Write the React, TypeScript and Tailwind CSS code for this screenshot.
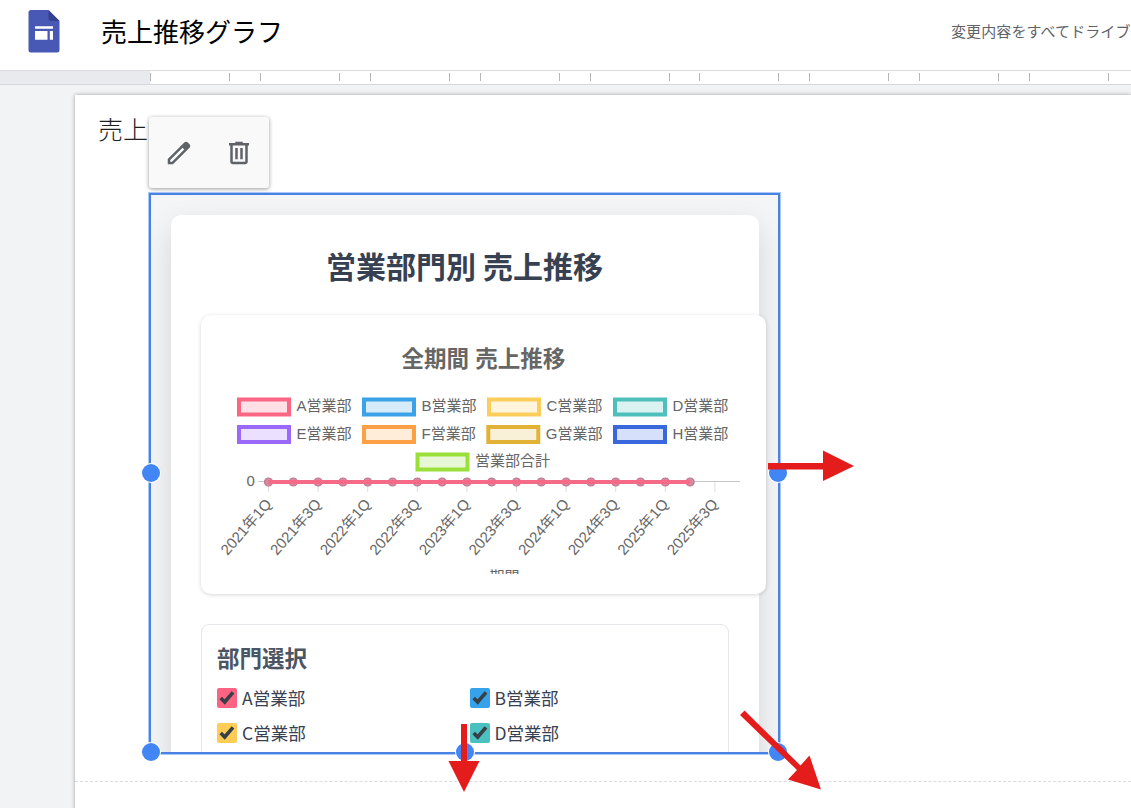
import type { ReactNode } from 'react';

interface Department {
  name: string;
  color: string;
  fill: string;
  x: number;
  y: number;
}

const DEPARTMENTS: Department[] = [
  { name: 'A営業部', color: '#fa6683', fill: '#ffe0e6', x: 16, y: 62.5 },
  { name: 'B営業部', color: '#3ba2e8', fill: '#d7ecfb', x: 141, y: 62.5 },
  { name: 'C営業部', color: '#fdcd5b', fill: '#fff5dd', x: 266, y: 62.5 },
  { name: 'D営業部', color: '#4fbfbc', fill: '#dbf2f2', x: 392, y: 62.5 },
  { name: 'E営業部', color: '#9a69fa', fill: '#ebe0ff', x: 16, y: 90 },
  { name: 'F営業部', color: '#fd9f45', fill: '#ffecd9', x: 141, y: 90 },
  { name: 'G営業部', color: '#e1b235', fill: '#f8f0d7', x: 265.3, y: 90 },
  { name: 'H営業部', color: '#3968dd', fill: '#d6e0fb', x: 392, y: 90 },
  { name: '営業部合計', color: '#9be03a', fill: '#e8f8d6', x: 194.5, y: 117.5 },
];

const QUARTERS = [
  '2021年1Q',
  '2021年3Q',
  '2022年1Q',
  '2022年3Q',
  '2023年1Q',
  '2023年3Q',
  '2024年1Q',
  '2024年3Q',
  '2025年1Q',
  '2025年3Q',
];

const FIRST_X = 47.5;
const STEP = 24.8;
const AXIS_Y = 147;
const POINT_COUNT = 18;

const CHECKBOXES = [
  { name: 'A営業部', className: 'bg-[#ff6384]' },
  { name: 'B営業部', className: 'bg-[#36a2eb]' },
  { name: 'C営業部', className: 'bg-[#ffcd56]' },
  { name: 'D営業部', className: 'bg-[#4bc0c0]' },
];

const HANDLES = [
  'left-[-9px] top-[269px]',
  'left-[618px] top-[269px]',
  'left-[-9px] top-[548px]',
  'left-[305px] top-[548px]',
  'left-[618px] top-[548px]',
];

function SitesLogo() {
  return (
    <svg width="32" height="43" viewBox="0 0 32 43" className="shrink-0">
      <path d="M3 0H20.500L31.500 11V40a2.500 2.500 0 0 1-2.500 2.500H3A2.500 2.500 0 0 1 .5 40V2.500A2.500 2.500 0 0 1 3 0Z" fill="#4758b5" />
      <path d="M20.500 0 31.500 11H23a2.500 2.500 0 0 1-2.500-2.500Z" fill="#34418f" />
      <path d="M7 16.300h18v2.400H7zM7 21h12.500v8.700H7zM21.800 21H25v8.700h-3.200z" fill="#fff" />
    </svg>
  );
}

function Header() {
  return (
    <header className="flex h-[71px] shrink-0 items-center border-b border-[#d9dbde] bg-white pb-2 pl-7">
      <SitesLogo />
      <h1 className="ml-[41px] text-[26px] leading-none whitespace-nowrap text-black">売上推移グラフ</h1>
      <p className="ml-auto w-[180px] text-[15px] tracking-[0.1px] whitespace-nowrap text-[#5f6368]">
        変更内容をすべてドライブ
      </p>
    </header>
  );
}

function Ruler() {
  return (
    <div className="flex h-3.5 shrink-0 overflow-hidden border-b border-[#d5d7da] bg-white">
      <div className="w-[150px] shrink-0 bg-[#e8eaed]" />
      {Array.from({ length: 9 }, (_, i) => (
        <div key={i} className="mt-0.5 flex h-2 w-[109.88px] shrink-0 border-l border-[#b4b6b9]">
          <div className="w-[79px] border-r border-[#b4b6b9]" />
        </div>
      ))}
    </div>
  );
}

function EditToolbar() {
  return (
    <div className="absolute -top-[78px] -left-[2px] flex h-[71px] w-[120px] items-center rounded-[3px] bg-[#f9f9f9] shadow-[0_1px_4px_rgba(0,0,0,0.4)]">
      <button type="button" aria-label="編集" className="flex w-[60px] justify-center">
        <svg width="30" height="30" viewBox="0 0 24 24" fill="#5f6368">
          <path d="M20.410 4.940l-1.350-1.350c-.78-.78-2.050-.78-2.830 0L3 16.820V21h4.180L20.410 7.770c.79-.78.79-2.050 0-2.830zM6.410 19H5v-1.360l9.820-9.820 1.410 1.410L6.410 19z" />
        </svg>
      </button>
      <button type="button" aria-label="削除" className="flex w-[60px] justify-center">
        <svg width="30" height="30" viewBox="0 0 24 24" fill="#5f6368">
          <path d="M15 4V3H9v1H4v2h1v13c0 1.100.9 2 2 2h10c1.100 0 2-.9 2-2V6h1V4h-5zm2 15H7V6h10v13zM9 8h2v9H9zM13 8h2v9h-2z" />
        </svg>
      </button>
    </div>
  );
}

function SalesChart() {
  return (
    <svg width="525" height="239" viewBox="0 0 525 239" className="block overflow-hidden font-['Liberation_Sans','Noto_Sans_CJK_JP',sans-serif]" fill="#666">
      <text x="262.500" y="31.500" textAnchor="middle" fontSize="22.5" fontWeight="700">
        全期間 売上推移
      </text>

      {/* Legend */}
      {DEPARTMENTS.map((d) => (
        <g key={d.name} fontSize="15">
          <rect x={d.x + 2} y={d.y + 2} width="50" height="15" fill={d.fill} stroke={d.color} strokeWidth="4" />
          <text x={d.x + 59.5} y={d.y + 13.5}>
            {d.name}
          </text>
        </g>
      ))}

      {/* Axis */}
      <text x="25.500" y="150.800" fontSize="15">0</text>
      <path d={`M37 ${AXIS_Y - 0.5}H519`} stroke="#c6c6c6" />
      {QUARTERS.map((label, i) => {
        const x = FIRST_X + i * STEP * 2;
        return (
          <g key={label}>
            <path d={`M${x} ${AXIS_Y}v10`} stroke="#dedede" />
            <text transform={`translate(${x + 3.8} 169.5) rotate(-49)`} textAnchor="end" fontSize="15">
              {label}
            </text>
          </g>
        );
      })}
      <text x="283.500" y="247" textAnchor="middle" fontSize="15">期間</text>

      {/* Series */}
      {Array.from({ length: POINT_COUNT }, (_, i) => (
        <circle key={i} cx={FIRST_X + i * STEP} cy={AXIS_Y} r="4" fill="#d9899d" stroke="#b9788c" strokeWidth="1.2" />
      ))}
      <path d={`M${FIRST_X} ${AXIS_Y}H${FIRST_X + STEP * (POINT_COUNT - 1)}`} stroke="#f46a87" strokeWidth="4" />
    </svg>
  );
}

function DepartmentPicker() {
  return (
    <section className="mt-[30px] h-60 rounded-lg border border-[#e5e7eb] px-[15.5px] pt-[15px]">
      <h3 className="text-[22.5px] leading-[34px] font-bold text-[#4b5563]">部門選択</h3>
      <div className="mt-[11px] grid grid-cols-2 gap-x-2.5 gap-y-[9px]">
        {CHECKBOXES.map((box) => (
          <label key={box.name} className="flex h-[26px] items-center gap-[5px] text-[17.5px] text-[#374151]">
            <span className={`flex size-5 items-center justify-center rounded-[2px] ${box.className}`}>
              <svg width="20" height="20" viewBox="0 0 20 20" fill="none" stroke="#374046" strokeWidth="3.6">
                <path d="m3.700 10 4 4L16 4.400" />
              </svg>
            </span>
            {box.name}
          </label>
        ))}
      </div>
    </section>
  );
}

function SalesWidget() {
  return (
    <div className="h-full overflow-hidden bg-[#f3f5f7] px-[19.5px] pt-5">
      <div className="h-[700px] rounded-[10px] bg-white px-[30px] pt-[30px] shadow-[0_12px_31px_rgba(0,0,0,0.13)]">
        <h2 className="text-center text-[30px] leading-[40px] font-bold text-[#374151]">営業部門別 売上推移</h2>
        <div className="mt-[30px] h-[279px] w-[565px] rounded-[10px] bg-white p-5 shadow-[0_1px_4px_rgba(0,0,0,0.16)]">
          <SalesChart />
        </div>
        <DepartmentPicker />
      </div>
    </div>
  );
}

function Overlay({ className, children }: { className: string; children: ReactNode }) {
  return (
    <svg className={`pointer-events-none absolute ${className}`} fill="#e51c1c">
      {children}
    </svg>
  );
}

function SelectedEmbed() {
  return (
    <div className="relative mt-[47px] ml-[74px] h-[561px] w-[631px] border-2 border-[#4a82e4] outline outline-[#a9c8f8]">
      <SalesWidget />
      <EditToolbar />
      {HANDLES.map((position) => (
        <span key={position} className={`absolute size-[18px] rounded-full bg-[#4285f4] ring-1 ring-white ${position}`} />
      ))}

      {/* Resize direction arrows */}
      <Overlay className="top-[255px] left-[617px] h-8 w-[88px]">
        <path d="M0 13h55V.5L86 16 55 31V19.500H0z" />
      </Overlay>
      <Overlay className="top-[529px] left-[297px] h-[70px] w-8">
        <path d="M13 0h6v37h12.500L16 68 .5 37H13z" />
      </Overlay>
      <Overlay className="top-[515px] left-[588px] h-20 w-[84px]">
        <path d="M5.500.5 61.500 55.500l9-10L82 79.500 49 69.500l9-9.500L1 5z" />
      </Overlay>
    </div>
  );
}

export default function App() {
  return (
    <div className="flex h-[808px] w-[1131px] flex-col overflow-hidden bg-white font-['Noto_Sans_CJK_JP',sans-serif]">
      <Header />
      <Ruler />
      <main className="grow overflow-hidden bg-[#f1f3f4] pt-2.5 pl-[75px]">
        <div className="h-[800px] bg-white shadow-[0_0_4px_rgba(0,0,0,0.35)]">
          <div className="h-[687px] border-b border-dashed border-[#dadce0] pt-[15px]">
            <p className="pl-[23px] text-[25px] leading-9 font-light text-[#212121]">売上</p>
            <SelectedEmbed />
          </div>
        </div>
      </main>
    </div>
  );
}
